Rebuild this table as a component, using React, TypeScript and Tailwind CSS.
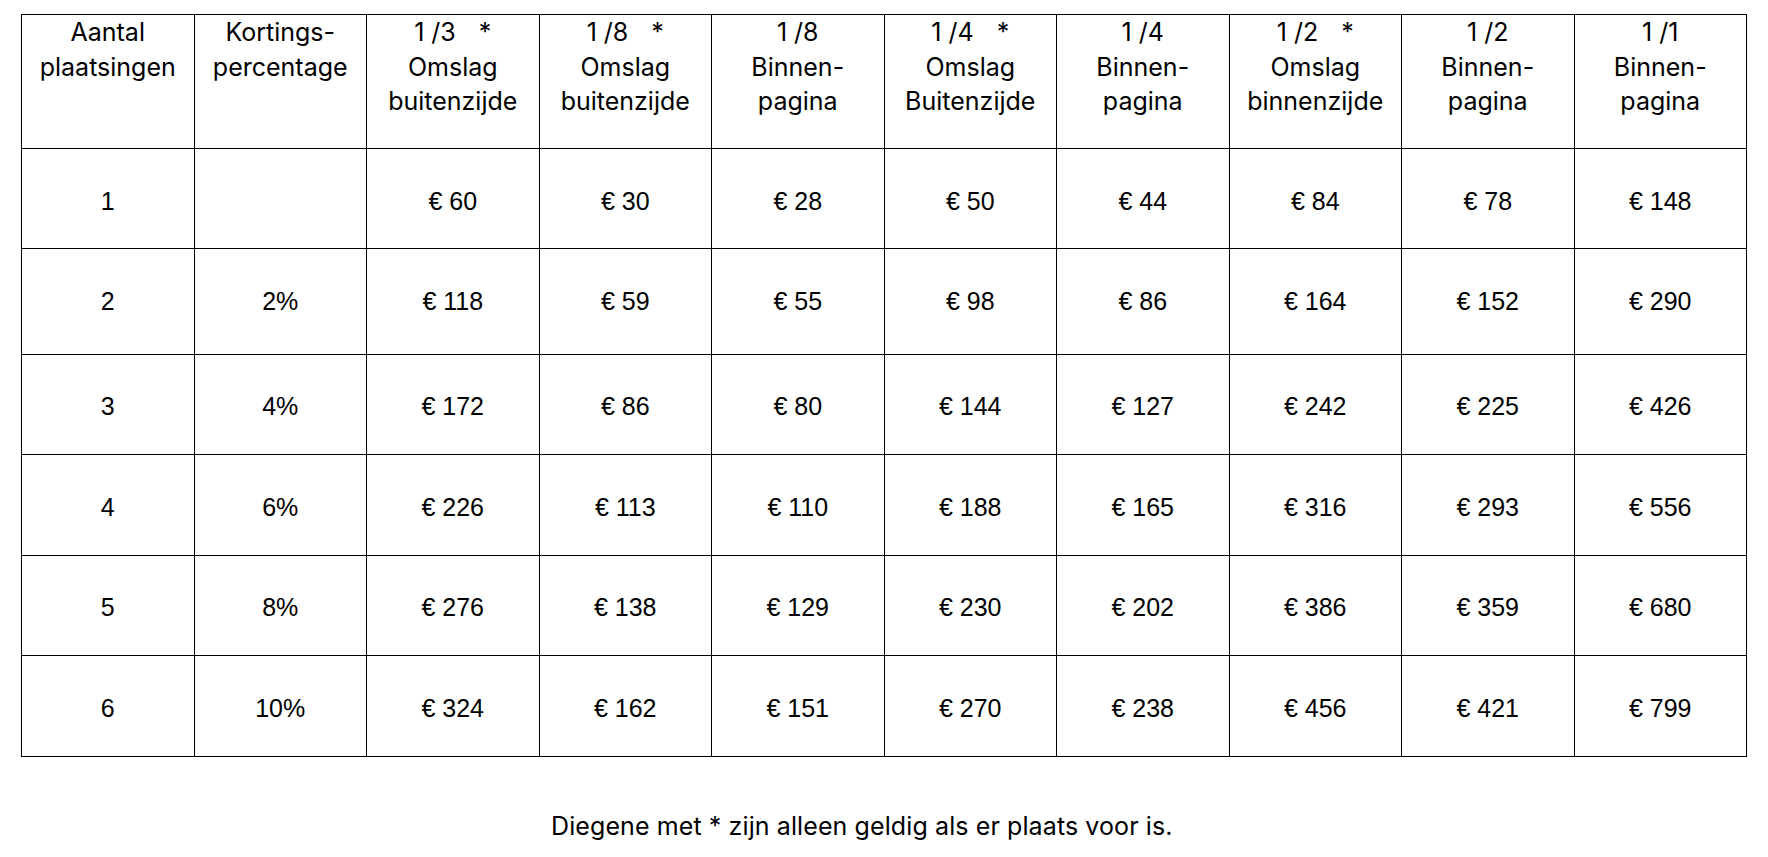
import React from 'react'

type Header = { top: string; star?: boolean; lines: string[] }

const headers: Header[] = [
  { top: 'Aantal', lines: ['plaatsingen'] },
  { top: 'Kortings-', lines: ['percentage'] },
  { top: '1 /3', star: true, lines: ['Omslag', 'buitenzijde'] },
  { top: '1 /8', star: true, lines: ['Omslag', 'buitenzijde'] },
  { top: '1 /8', lines: ['Binnen-', 'pagina'] },
  { top: '1 /4', star: true, lines: ['Omslag', 'Buitenzijde'] },
  { top: '1 /4', lines: ['Binnen-', 'pagina'] },
  { top: '1 /2', star: true, lines: ['Omslag', 'binnenzijde'] },
  { top: '1 /2', lines: ['Binnen-', 'pagina'] },
  { top: '1 /1', lines: ['Binnen-', 'pagina'] },
]

// row height + small offset so the digits sit where they do in the print
const rows = [
  { n: '1', pct: '', h: 'h-[100px]', pt: 'pt-[6px]', prices: [60, 30, 28, 50, 44, 84, 78, 148] },
  { n: '2', pct: '2%', h: 'h-[106px]', pt: 'pt-0', prices: [118, 59, 55, 98, 86, 164, 152, 290] },
  { n: '3', pct: '4%', h: 'h-[100px]', pt: 'pt-[5px]', prices: [172, 86, 80, 144, 127, 242, 225, 426] },
  { n: '4', pct: '6%', h: 'h-[101px]', pt: 'pt-[5px]', prices: [226, 113, 110, 188, 165, 316, 293, 556] },
  { n: '5', pct: '8%', h: 'h-[100px]', pt: 'pt-[5px]', prices: [276, 138, 129, 230, 202, 386, 359, 680] },
  { n: '6', pct: '10%', h: 'h-[101px]', pt: 'pt-[5px]', prices: [324, 162, 151, 270, 238, 456, 421, 799] },
]

export default function App() {
  return (
    <div className="min-h-screen bg-white pt-[14px] pl-[21px] text-black">
      <table className="w-[1726px] table-fixed border-collapse border border-black">
        <thead>
          <tr>
            {headers.map((h, i) => (
              <th
                key={i}
                className="h-[134px] border border-black p-0 align-top text-center font-['Inter',sans-serif] text-[25px] leading-[34.5px] font-normal"
              >
                <div className="whitespace-pre">
                  {h.top}
                  {h.star && <span className="ml-[23px]">*</span>}
                </div>
                {h.lines.map((l) => (
                  <div key={l}>{l}</div>
                ))}
              </th>
            ))}
          </tr>
        </thead>
        <tbody className="font-['Liberation_Sans',Arial,sans-serif] text-[25px]">
          {rows.map((r) => (
            <tr key={r.n}>
              <td className={`${r.h} ${r.pt} border border-black p-0 text-center align-middle`}>{r.n}</td>
              <td className={`${r.h} ${r.pt} border border-black p-0 text-center align-middle`}>{r.pct}</td>
              {r.prices.map((p, i) => (
                <td key={i} className={`${r.h} ${r.pt} border border-black p-0 text-center align-middle`}>
                  € {p}
                </td>
              ))}
            </tr>
          ))}
        </tbody>
      </table>
      <p className="mt-[53px] ml-[530px] whitespace-nowrap font-['Inter',sans-serif] text-[25px] leading-[32px] tracking-[0.1px]">
        Diegene met * zijn alleen geldig als er plaats voor is.
      </p>
    </div>
  )
}
